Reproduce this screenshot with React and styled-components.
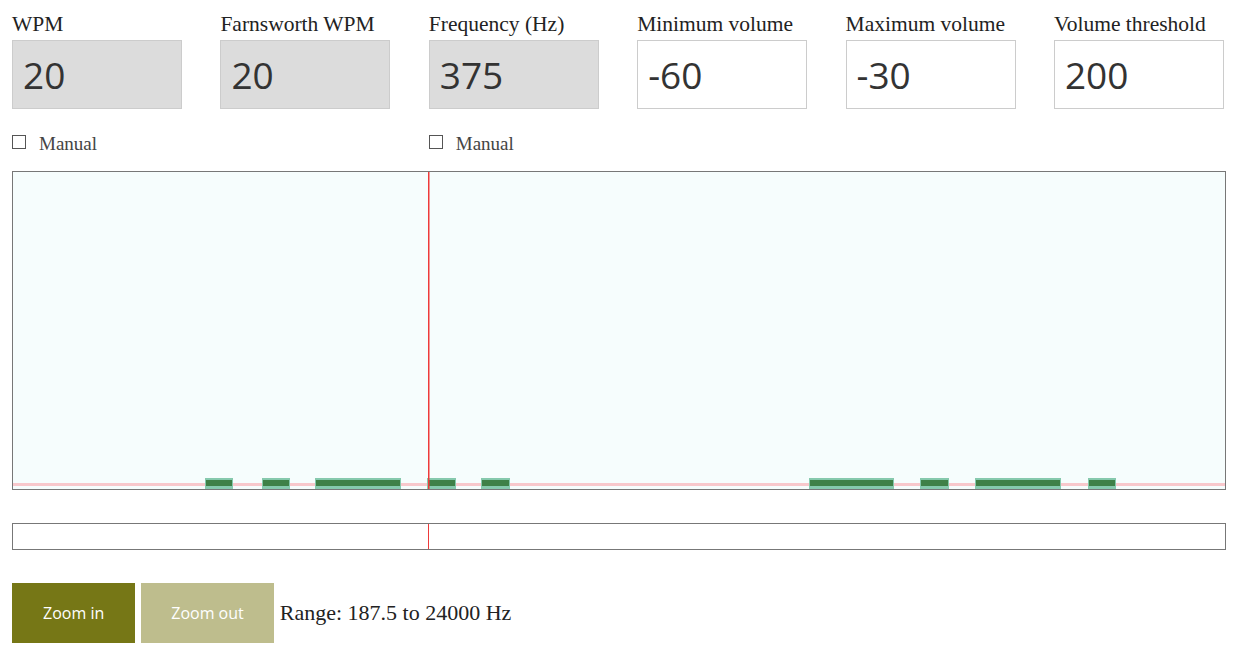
import React from 'react'
import styled, { createGlobalStyle } from 'styled-components'

const GlobalStyle = createGlobalStyle`
    body {
        margin: 0;
        background: #fff;
        font-family: "Liberation Serif", "Times New Roman", serif;
        color: #222;
    }
`;

const Page = styled.div`
    padding: 8px 7px 0 12px;
`;

const Fields = styled.div`
    display: grid;
    grid-template-columns: repeat(6, 170px);
    column-gap: 38.4px;
`;

const Field = styled.div`
    display: flex;
    flex-direction: column;
`;

const Label = styled.label`
    font-size: 21.5px;
    line-height: 32px;
    height: 32px;
    color: #222;
`;

const NumberInput = styled.input`
    box-sizing: border-box;
    width: 170px;
    height: 69px;
    margin: 0;
    padding: 0 10px;
    border: 1px solid #ccc;
    background: ${p => (p.disabled ? '#dcdcdc' : '#fff')};
    color: #333;
    font-family: "Open Sans", "Noto Sans", sans-serif;
    font-size: 37px;
    outline: none;
`;

const Checks = styled.div`
    display: grid;
    grid-template-columns: repeat(6, 170px);
    column-gap: 38.4px;
    margin-top: 23px;
    height: 24px;
`;

const Check = styled.label`
    grid-column: ${p => p.col};
    display: flex;
    align-items: center;
    gap: 13px;
    font-size: 19px;
    color: #444;
    line-height: 24px;
    white-space: nowrap;
`;

const Box = styled.span`
    display: inline-block;
    box-sizing: border-box;
    width: 14px;
    height: 14px;
    border: 1px solid #555;
    background: #fff;
    margin-top: -5px;
`;

const Canvas = styled.div`
    box-sizing: border-box;
    width: 1214px;
    height: 319px;
    margin-top: 15px;
    border: 1px solid #777;
    background: #f6fdfd;
`;

const Strip = styled.div`
    position: relative;
    box-sizing: border-box;
    width: 1214px;
    height: 27px;
    margin-top: 33px;
    border: 1px solid #777;
    background: #fff;
`;

const Marker = styled.div`
    position: absolute;
    top: 0;
    bottom: 0;
    left: ${p => p.x}px;
    width: 1px;
    background: #ee3a3a;
`;

const Controls = styled.div`
    display: flex;
    align-items: center;
    gap: 6px;
    margin-top: 33px;
`;

const Button = styled.button`
    height: 60px;
    padding: 0 ${p => p.pad}px;
    border: none;
    margin: 0;
    background: ${p => (p.muted ? '#bebd8d' : '#767716')};
    color: #fff;
    font-family: "Open Sans", "Noto Sans", sans-serif;
    font-size: 16px;
`;

const Range = styled.span`
    font-size: 22px;
    color: #222;
`;

const bars = [
    [205, 233], [262, 290], [315, 401], [427, 456], [481, 510],
    [809, 894], [920, 949], [975, 1061], [1088, 1116],
];

function Spectrum() {
    return (
        <svg width="1212" height="317" style={{ display: 'block' }}>
            <rect x="0" y="311" width="1212" height="3" fill="#f8c8cc" />
            {bars.map(([a, b]) => (
                <g key={a}>
                    <rect x={a - 13} y="306" width={b - a} height="11" fill="#86c9ad" />
                    <rect x={a - 12} y="308" width={b - a - 2} height="6" fill="#3f8047" />
                </g>
            ))}
            <rect x="415" y="0" width="1.5" height="317" fill="#ee3a3a" />
        </svg>
    )
}

const fields = [
    { label: 'WPM', value: '20', disabled: true },
    { label: 'Farnsworth WPM', value: '20', disabled: true },
    { label: 'Frequency (Hz)', value: '375', disabled: true },
    { label: 'Minimum volume', value: '-60' },
    { label: 'Maximum volume', value: '-30' },
    { label: 'Volume threshold', value: '200' },
];

export default function App() {
    return (
        <Page>
            <GlobalStyle />
            <Fields>
                {fields.map(f => (
                    <Field key={f.label}>
                        <Label>{f.label}</Label>
                        <NumberInput defaultValue={f.value} disabled={f.disabled} />
                    </Field>
                ))}
            </Fields>
            <Checks>
                <Check col={1}><Box />Manual</Check>
                <Check col={3}><Box />Manual</Check>
            </Checks>
            <Canvas>
                <Spectrum />
            </Canvas>
            <Strip>
                <Marker x={415} />
            </Strip>
            <Controls>
                <Button pad={31}>Zoom in</Button>
                <Button muted pad={30}>Zoom out</Button>
                <Range>Range: 187.5 to 24000 Hz</Range>
            </Controls>
        </Page>
    )
}
